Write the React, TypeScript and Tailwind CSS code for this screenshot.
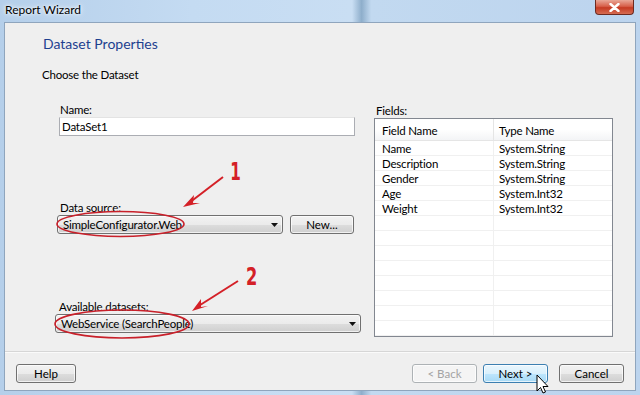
import React from "react";

const font = { fontFamily: 'Lato, "Noto Sans", sans-serif' };

function Btn({ children, w, variant = "normal" }: { children: React.ReactNode; w: string; variant?: "normal" | "hot" | "disabled" }) {
  const cls =
    variant === "hot"
      ? "border-[#3c7fb1] bg-[linear-gradient(#eaf6fd_0%,#d9f0fc_50%,#bee6fd_51%,#a7d9f5_100%)] text-black"
      : variant === "disabled"
      ? "border-[#adb2b5] bg-[#f4f4f4] text-[#a3a3a3]"
      : "border-[#707070] bg-[linear-gradient(#f2f2f2_0%,#ebebeb_50%,#dddddd_51%,#cfcfcf_100%)] text-black";
  return (
    <div className={`${w} h-[19px] rounded-[3px] border flex items-center justify-center text-[11.5px] leading-none shadow-[inset_0_0_0_1px_rgba(255,255,255,0.7)] ${cls}`}>
      {children}
    </div>
  );
}

function Combo({ text, w, pl }: { text: string; w: string; pl: string }) {
  return (
    <div className={`${w} ${pl} h-[19px] rounded-[3px] border border-[#707070] bg-[linear-gradient(#f2f2f2_0%,#ebebeb_50%,#dddddd_51%,#cfcfcf_100%)] shadow-[inset_0_0_0_1px_rgba(255,255,255,0.7)] flex items-center pr-[4px] text-[11.5px] tracking-[-0.2px] leading-[19px] text-black`}>
      <span className="flex-1">{text}</span>
      <svg width="7" height="4" viewBox="0 0 7 4"><path d="M0 0h7L3.5 4z" fill="#111" /></svg>
    </div>
  );
}

function Label({ children, pl }: { children: React.ReactNode; pl: string }) {
  return <div className={`h-[14px] leading-[13px] text-[11.5px] tracking-[-0.2px] text-black ${pl}`}>{children}</div>;
}

const rows = [
  ["Name", "System.String"],
  ["Description", "System.String"],
  ["Gender", "System.String"],
  ["Age", "System.Int32"],
  ["Weight", "System.Int32"],
];

export default function App() {
  const allRows = [...rows, ...Array.from({ length: 8 }, () => ["", ""])];
  return (
    <div className="relative w-[640px] h-[395px] overflow-hidden bg-[linear-gradient(90deg,#b5cfea_0%,#c4dbf2_30%,#c9def3_55%,#8eaecb_56.5%,#c2d9f0_58%,#bcd4ee_100%)] flex flex-col" style={font}>
      {/* title bar */}
      <div className="h-[22px] flex items-start justify-between pl-[5px] pr-[6px]">
        <span className="text-[12px] leading-[20px] text-black [text-shadow:0_0_6px_#fff,0_0_3px_#fff]">Report Wizard</span>
        <div className="w-[39px] h-[15px] rounded-b-[4px] border border-t-0 border-[#6d2a20] bg-[linear-gradient(#e9a797_0%,#d7604a_45%,#c53a22_55%,#d56c52_100%)] flex items-center justify-center">
          <svg width="11" height="9" viewBox="0 0 11 9"><path d="M1.5 1l8 7M9.5 1l-8 7" stroke="#fff" strokeWidth="2.4" strokeLinecap="round" /></svg>
        </div>
      </div>
      {/* panel */}
      <div className="mx-[4px] h-[369px] border border-[#8fa5bd] bg-[#efefef] flex flex-col">
        <div className="pl-[38px] pt-[12px] text-[14px] leading-[18px] text-[#1d3f8f]">Dataset Properties</div>
        <div className="pl-[37px] mt-[14px] text-[11.5px] tracking-[-0.2px] leading-[15px] h-[14px] text-black">Choose the Dataset</div>
        <div className="flex mt-[22px] h-[234px]">
          {/* left column */}
          <div className="ml-[50px] w-[306px] flex flex-col">
            <Label pl="pl-[5px]">Name:</Label>
            <div className="ml-[4px] w-[296px] h-[19px] border border-[#abadb3] border-t-[#e3e3e3] bg-white pl-[2px] text-[11.5px] tracking-[-0.2px] leading-[18px] text-black">DataSet1</div>
            <div className="mt-[65px]">
              <Label pl="pl-[5px]">Data source:</Label>
            </div>
            <div className="flex gap-[7px] ml-[2px]">
              <Combo text="SimpleConfigurator.Web" w="w-[226px]" pl="pl-[5px]" />
              <Btn w="w-[64px]">New...</Btn>
            </div>
            <div className="mt-[66px]">
              <Label pl="pl-[4px]">Available datasets:</Label>
            </div>
            <Combo text="WebService (SearchPeople)" w="w-[306px]" pl="pl-[5px]" />
          </div>
          {/* right column */}
          <div className="ml-[13px] w-[239px] flex flex-col">
            <div className="mt-[1px]">
              <Label pl="pl-[2px]">Fields:</Label>
            </div>
            <div className="h-[219px] border border-[#828790] bg-white overflow-hidden">
              <div className="h-[22px] flex border-b border-[#e5e5e5] bg-[linear-gradient(#ffffff_0%,#ffffff_50%,#f3f4f6_100%)] text-[11.5px] tracking-[-0.2px] leading-[24px] text-black">
                <div className="w-[119px] pl-[7px] border-r border-[#e5e5e5]">Field Name</div>
                <div className="flex-1 pl-[5px]">Type Name</div>
              </div>
              {allRows.map((r, i) => (
                <div key={i} className="h-[15px] flex border-b border-[#f0f0f0] text-[11.5px] tracking-[-0.2px] leading-[16px] text-black">
                  <div className="w-[119px] pl-[7px] border-r border-[#f0f0f0] overflow-hidden">{r[0]}</div>
                  <div className="flex-1 pl-[5px] overflow-hidden">{r[1]}</div>
                </div>
              ))}
            </div>
          </div>
        </div>
        <div className="mt-[14px] border-t border-[#d6d6d6] shadow-[0_1px_0_#fafafa]" />
        <div className="flex items-center mt-[12px] pl-[11px] pr-[11px]">
          <Btn w="w-[60px]">Help</Btn>
          <div className="flex-1" />
          <Btn w="w-[65px]" variant="disabled">&lt; Back</Btn>
          <div className="w-[6px]" />
          <Btn w="w-[65px]" variant="hot">Next &gt;</Btn>
          <div className="w-[11px]" />
          <Btn w="w-[65px]">Cancel</Btn>
        </div>
      </div>

      {/* annotations */}
      <svg className="absolute left-0 top-0 pointer-events-none" width="640" height="395">
        <ellipse cx="120.5" cy="224" rx="63.5" ry="12.5" fill="none" stroke="#c8202a" strokeWidth="1.6" />
        <ellipse cx="122" cy="324" rx="67" ry="14" fill="none" stroke="#c8202a" strokeWidth="1.6" />
        <path d="M223 177 L189 203" stroke="#d42027" strokeWidth="2" />
        <path d="M183 207 L194 195 L193 203 L200 203 Z" fill="#d42027" />
        <path d="M238 281 L197 307" stroke="#d42027" strokeWidth="2" />
        <path d="M192 311 L201 299 L201 307 L208 306 Z" fill="#d42027" />
        {/* cursor */}
        <path d="M537 375 L537 391 L540.5 387.5 L543 393 L545.5 392 L543 386.5 L548 386.5 Z" fill="#fff" stroke="#000" strokeWidth="1" />
      </svg>
      <div className="absolute left-[228px] top-[158px] text-[24px] leading-[28px] font-bold text-[#d42027] scale-x-[0.7]" style={{ fontFamily: '"DejaVu Sans Condensed", "Liberation Sans", sans-serif' }}>1</div>
      <div className="absolute left-[244px] top-[263px] text-[24px] leading-[28px] font-bold text-[#d42027] scale-x-[0.75]" style={{ fontFamily: '"DejaVu Sans Condensed", "Liberation Sans", sans-serif' }}>2</div>
    </div>
  );
}
